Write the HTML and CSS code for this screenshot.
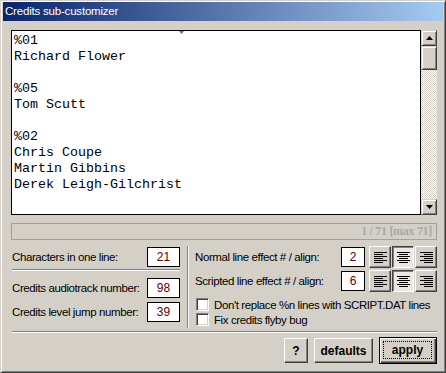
FILE: index.html
```html
<!DOCTYPE html>
<html lang="en">
<head>
    <meta charset="UTF-8">
    <title>Credits sub-customizer</title>
    <link rel="stylesheet" href="styles.css">
</head>
<body>
    <div class="window">
        <div class="titlebar">Credits sub-customizer</div>
        <div class="client">
            <div class="memo-wrap">
                <div class="memo">
                    <svg class="tab-mark" width="5" height="6" viewBox="0 0 5 6"><path d="M0 0H5V3L2.5 6L0 3Z" fill="#6e6e6e"/></svg>
                    <div class="memo-text">%01
Richard Flower

%05
Tom Scutt

%02
Chris Coupe
Martin Gibbins
Derek Leigh-Gilchrist</div>
                </div>
                <div class="scrollbar">
                    <div class="sb-btn"><svg width="7" height="4" viewBox="0 0 7 4"><path d="M3.5 0L7 4H0Z" fill="#000"/></svg></div>
                    <div class="sb-thumb"></div>
                    <div class="sb-track"></div>
                    <div class="sb-btn"><svg width="7" height="4" viewBox="0 0 7 4"><path d="M0 0H7L3.5 4Z" fill="#000"/></svg></div>
                </div>
            </div>

            <div class="status">1 / 71 [max 71]</div>

            <div class="options">
                <div class="col-left">
                    <div class="field-row">
                        <span class="label">Characters in one line:</span>
                        <span class="num">21</span>
                    </div>
                    <div class="groove-h"></div>
                    <div class="field-row row-audio">
                        <span class="label">Credits audiotrack number:</span>
                        <span class="num">98</span>
                    </div>
                    <div class="field-row row-jump">
                        <span class="label">Credits level jump number:</span>
                        <span class="num">39</span>
                    </div>
                </div>
                <div class="groove-v"></div>
                <div class="col-right">
                    <div class="field-row">
                        <span class="label">Normal line effect # / align:</span>
                        <span class="num num-small">2</span>
                        <div class="align-group">
                            <span class="align-btn"><svg width="13" height="11" viewBox="0 0 13 11"><path d="M0 .5H13M0 2.5H9M0 4.5H13M0 6.5H9M0 8.5H13M0 10.5H9" stroke="#000"/></svg></span>
                            <span class="align-btn is-down"><svg width="13" height="11" viewBox="0 0 13 11"><path d="M0 .5H13M2 2.5H11M0 4.5H13M2 6.5H11M0 8.5H13M2 10.5H11" stroke="#000"/></svg></span>
                            <span class="align-btn"><svg width="13" height="11" viewBox="0 0 13 11"><path d="M0 .5H13M4 2.5H13M0 4.5H13M4 6.5H13M0 8.5H13M4 10.5H13" stroke="#000"/></svg></span>
                        </div>
                    </div>
                    <div class="field-row row-scripted">
                        <span class="label">Scripted line effect # / align:</span>
                        <span class="num num-small">6</span>
                        <div class="align-group">
                            <span class="align-btn"><svg width="13" height="11" viewBox="0 0 13 11"><path d="M0 .5H13M0 2.5H9M0 4.5H13M0 6.5H9M0 8.5H13M0 10.5H9" stroke="#000"/></svg></span>
                            <span class="align-btn is-down"><svg width="13" height="11" viewBox="0 0 13 11"><path d="M0 .5H13M2 2.5H11M0 4.5H13M2 6.5H11M0 8.5H13M2 10.5H11" stroke="#000"/></svg></span>
                            <span class="align-btn"><svg width="13" height="11" viewBox="0 0 13 11"><path d="M0 .5H13M4 2.5H13M0 4.5H13M4 6.5H13M0 8.5H13M4 10.5H13" stroke="#000"/></svg></span>
                        </div>
                    </div>
                    <label class="check-row row-first"><span class="check"></span>Don't replace %n lines with SCRIPT.DAT lines</label>
                    <label class="check-row"><span class="check"></span>Fix credits flyby bug</label>
                </div>
            </div>

            <div class="groove-h groove-full"></div>

            <div class="buttons">
                <button class="btn btn-help">?</button>
                <button class="btn btn-defaults">defaults</button>
                <button class="btn btn-apply is-default"><span class="focus">apply</span></button>
            </div>
        </div>
    </div>
</body>
</html>
```

FILE: styles.css
```css
body {
    margin: 0;
    background: #d4d0c8;
    font-family: "Liberation Sans", Arial, sans-serif;
    font-size: 11.5px;
    letter-spacing: -0.4px;
    color: #000;
}

.window {
    width: 446px;
    height: 373px;
    box-sizing: border-box;
    border: 1px solid;
    border-color: #d4d0c8 #404040 #404040 #d4d0c8;
    box-shadow: inset 1px 1px #fff, inset -1px -1px #808080;
    padding: 1px 2px 2px 2px;
    background: #d4d0c8;
    display: flex;
    flex-direction: column;
}

.titlebar {
    height: 19px;
    line-height: 19px;
    padding-left: 2px;
    background: linear-gradient(to right, #0a246a, #a6caf0);
    color: #fff;
    font-size: 11.5px;
    letter-spacing: -0.2px;
}

.client {
    padding: 9px 6px 0 8px;
}

/* memo + scrollbar */
.memo-wrap {
    display: flex;
    height: 185px;
}

.memo {
    flex: 1;
    position: relative;
    border: 1px solid #000;
    background: #fff;
    padding: 2px 2px;
    overflow: hidden;
}

.memo-text {
    font-family: "Liberation Mono", "Courier New", monospace;
    font-size: 13.33px;
    letter-spacing: 0;
    line-height: 16px;
    white-space: pre;
}

.tab-mark {
    position: absolute;
    left: 167px;
    top: -3px;
}

.scrollbar {
    width: 16px;
    display: flex;
    flex-direction: column;
}

.sb-btn,
.sb-thumb {
    box-sizing: border-box;
    height: 16px;
    border: 1px solid;
    border-color: #d4d0c8 #404040 #404040 #d4d0c8;
    box-shadow: inset 1px 1px #fff, inset -1px -1px #808080;
    background: #d4d0c8;
    display: flex;
    align-items: center;
    justify-content: center;
}

.sb-thumb {
    height: 24px;
}

.sb-track {
    flex: 1;
    background-color: #fff;
    background-image: repeating-conic-gradient(#d4d0c8 0 25%, #fff 0 50%);
    background-size: 2px 2px;
}

/* status line */
.status {
    margin-top: 8px;
    height: 17px;
    box-sizing: border-box;
    border: 1px solid #a0a0a0;
    text-align: right;
    padding-right: 4px;
    font-family: "Liberation Serif", "Times New Roman", serif;
    font-weight: bold;
    font-size: 12px;
    letter-spacing: -0.3px;
    line-height: 15px;
    color: #a8a8a8;
}

/* options */
.options {
    display: flex;
    height: 82px;
    margin: 6px 0 0 1px;
}

.col-left {
    width: 168px;
}

.col-right {
    width: 242px;
}

.field-row {
    display: flex;
    align-items: center;
    height: 22px;
    white-space: nowrap;
}

.label {
    flex: 1;
}

.num {
    box-sizing: border-box;
    width: 33px;
    height: 20px;
    border: 1px solid #000;
    background: #fff;
    color: #600000;
    text-align: center;
    line-height: 18px;
    font-size: 12px;
    letter-spacing: 0;
}

.num-small {
    width: 24px;
}

.groove-h {
    border-top: 1px solid #808080;
    border-bottom: 1px solid #fff;
    height: 0;
    margin-top: 1px;
}

.row-audio {
    margin-top: 6px;
}

.row-jump {
    margin-top: 2px;
}

.groove-v {
    width: 0;
    border-left: 1px solid #808080;
    border-right: 1px solid #fff;
    margin: 0 6px 0 7px;
}

.align-group {
    display: flex;
    gap: 1px;
    margin-left: 4px;
}

.align-btn {
    box-sizing: border-box;
    width: 22px;
    height: 22px;
    border: 1px solid;
    border-color: #fff #404040 #404040 #fff;
    box-shadow: inset -1px -1px #808080;
    display: flex;
    align-items: center;
    justify-content: center;
}

.align-btn.is-down {
    border-color: #404040 #fff #fff #404040;
    box-shadow: inset 1px 1px #808080;
    background-color: #eae8e4;
    padding: 1px 0 0 1px;
}

.row-scripted {
    margin-top: 2px;
}

.check-row {
    display: flex;
    align-items: center;
    height: 15px;
    padding-left: 1px;
    white-space: nowrap;
}

.row-first {
    margin-top: 5px;
}

.check {
    box-sizing: border-box;
    flex: none;
    width: 13px;
    height: 13px;
    border: 1px solid;
    border-color: #808080 #fff #fff #808080;
    box-shadow: inset 1px 1px #404040, inset -1px -1px #d4d0c8;
    background: #fff;
    margin-right: 5px;
}

.groove-full {
    margin-top: 3px;
    margin-left: 1px;
}

/* buttons */
.buttons {
    display: flex;
    justify-content: flex-end;
    align-items: center;
    gap: 6px;
    margin-top: 4px;
}

.btn {
    box-sizing: border-box;
    height: 25px;
    padding: 0;
    border: 1px solid;
    border-color: #fff #404040 #404040 #fff;
    box-shadow: inset -1px -1px #808080;
    background: #d4d0c8;
    font-family: "Liberation Sans", Arial, sans-serif;
    font-weight: bold;
    font-size: 12px;
    color: #000;
}

.btn-help {
    width: 24px;
}

.btn-defaults {
    width: 59px;
}

.btn-apply {
    width: 58px;
    height: 27px;
    border: 1px solid #000;
    box-shadow: inset 1px 1px #fff, inset -1px -1px #404040, inset -2px -2px #808080;
    display: flex;
    padding: 3px 4px 4px 3px;
}

.btn-apply .focus {
    flex: 1;
    border: 1px dotted #000;
    line-height: 17px;
}
```
